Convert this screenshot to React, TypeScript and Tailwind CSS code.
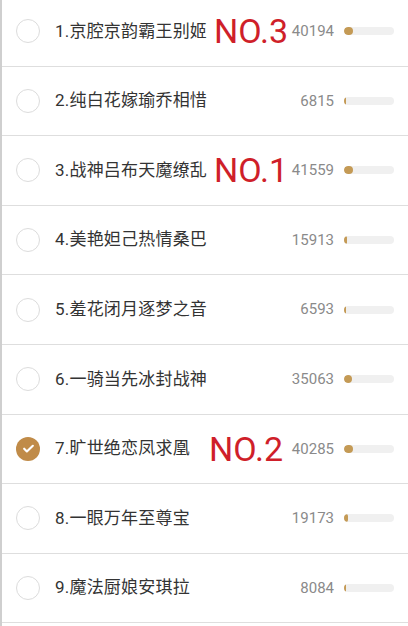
import React from 'react'

const items = [
  { name: '1.京腔京韵霸王别姬', votes: 40194, tag: 'NO.3', tagX: 'left-[212px]' },
  { name: '2.纯白花嫁瑜乔相惜', votes: 6815 },
  { name: '3.战神吕布天魔缭乱', votes: 41559, tag: 'NO.1', tagX: 'left-[212px]' },
  { name: '4.美艳妲己热情桑巴', votes: 15913 },
  { name: '5.羞花闭月逐梦之音', votes: 6593 },
  { name: '6.一骑当先冰封战神', votes: 35063 },
  { name: '7.旷世绝恋凤求凰', votes: 40285, tag: 'NO.2', tagX: 'left-[207px]', checked: true },
  { name: '8.一眼万年至尊宝', votes: 19173 },
  { name: '9.魔法厨娘安琪拉', votes: 8084 },
]

function Radio({ checked }: { checked?: boolean }) {
  if (checked) {
    return (
      <div className="w-[24px] h-[24px] rounded-full bg-[#c08b48] flex items-center justify-center shrink-0">
        <svg width="13" height="13" viewBox="0 0 24 24" fill="none" stroke="white" strokeWidth="4" strokeLinecap="round" strokeLinejoin="round">
          <path d="M4 12.5l5 5L20 7" />
        </svg>
      </div>
    )
  }
  return <div className="w-[24px] h-[24px] rounded-full border-[1.5px] border-[#dcdcdc] shrink-0" />
}

export default function App() {
  const max = 41559
  return (
    <div className="w-[408px] h-[626px] overflow-hidden bg-white border-l-2 border-[#cfcfcf]" style={{ fontFamily: 'Roboto, "Noto Sans CJK SC", sans-serif' }}>
      <div className="-mt-[3px]">
        {items.map((it) => (
          <div key={it.name} className="relative h-[69.6px] flex items-center border-b-[1.5px] border-[#dedede] pl-[14px] pr-[14px]">
            <Radio checked={it.checked} />
            <div className="ml-[15px] text-[17px] tracking-[0.2px] text-[#333] whitespace-nowrap">{it.name}</div>
            {it.tag && (
              <div className={`absolute ${it.tagX} top-1/2 -translate-y-1/2 text-[34px] leading-none font-normal text-[#cf1f2a] whitespace-nowrap`}>{it.tag}</div>
            )}
            <div className="flex-1" />
            <div className="text-[15px] text-[#8a8a8a]">{it.votes}</div>
            <div className="ml-[10px] w-[50px] h-[8px] rounded-full bg-[#f0f0f0] overflow-hidden">
              <div className="h-full rounded-full bg-[#c49a55]" style={{ width: `${Math.max(2, (it.votes / max) * 9)}px` }} />
            </div>
          </div>
        ))}
      </div>
    </div>
  )
}
